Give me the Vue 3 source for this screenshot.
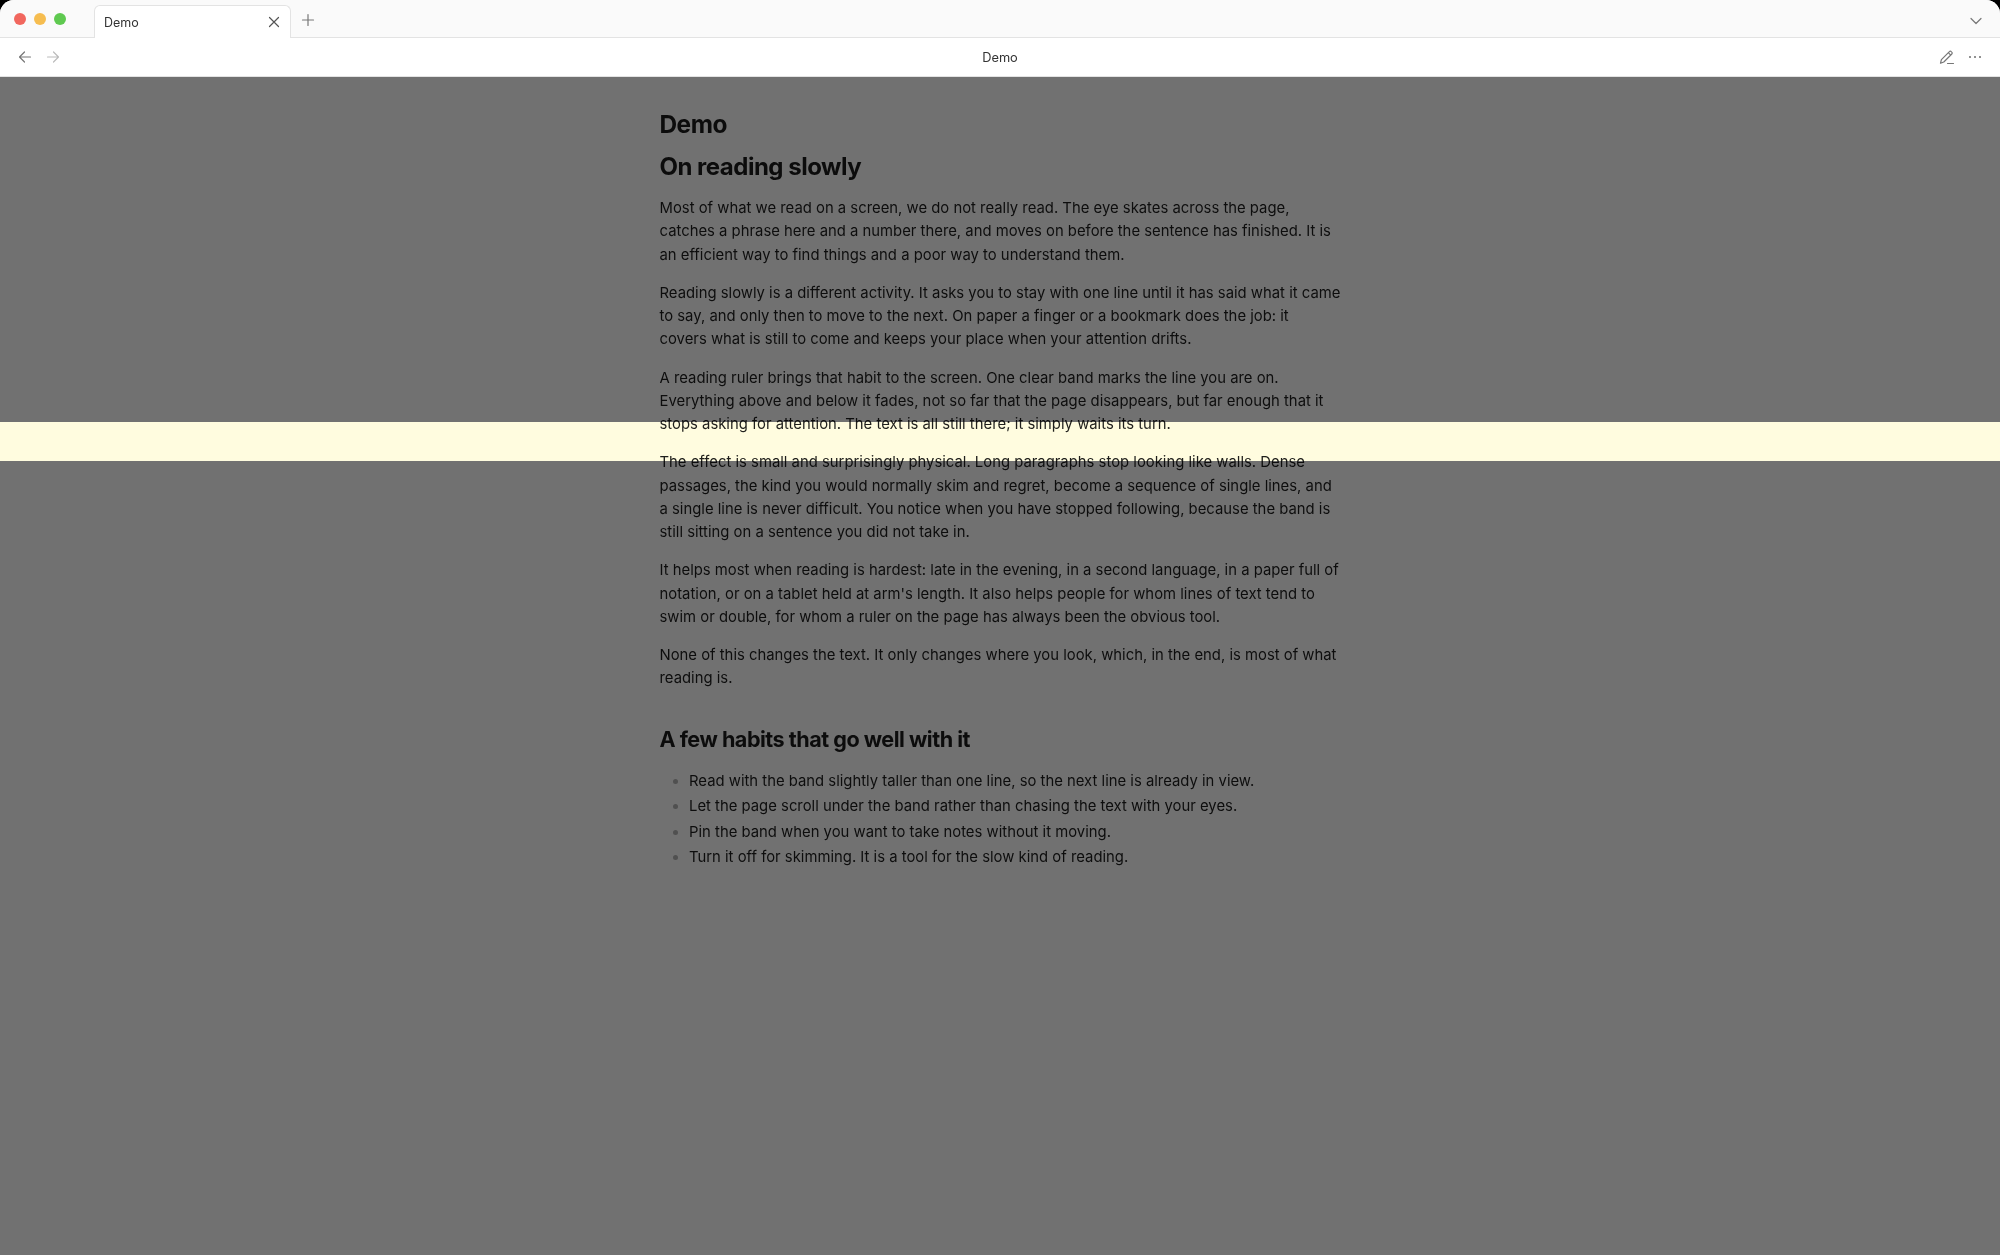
<script setup>
const paragraphs = [
  'Most of what we read on a screen, we do not really read. The eye skates across the page, catches a phrase here and a number there, and moves on before the sentence has finished. It is an efficient way to find things and a poor way to understand them.',
  'Reading slowly is a different activity. It asks you to stay with one line until it has said what it came to say, and only then to move to the next. On paper a finger or a bookmark does the job: it\ncovers what is still to come and keeps your place when your attention drifts.',
  'A reading ruler brings that habit to the screen. One clear band marks the line you are on. Everything above and below it fades, not so far that the page disappears, but far enough that it stops asking for attention. The text is all still there; it simply waits its turn.',
  'The effect is small and surprisingly physical. Long paragraphs stop looking like walls. Dense passages, the kind you would normally skim and regret, become a sequence of single lines, and a single line is never difficult. You notice when you have stopped following, because the band is still sitting on a sentence you did not take in.',
  "It helps most when reading is hardest: late in the evening, in a second language, in a paper full of notation, or on a tablet held at arm's length. It also helps people for whom lines of text tend to swim or double, for whom a ruler on the page has always been the obvious tool.",
  'None of this changes the text. It only changes where you look, which, in the end, is most of what reading is.'
]
const habits = [
  'Read with the band slightly taller than one line, so the next line is already in view.',
  'Let the page scroll under the band rather than chasing the text with your eyes.',
  'Pin the band when you want to take notes without it moving.',
  'Turn it off for skimming. It is a tool for the slow kind of reading.'
]
</script>

<template>
  <div class="window">
    <header class="tabbar">
      <div class="lights">
        <span class="light red"></span>
        <span class="light yellow"></span>
        <span class="light green"></span>
      </div>
      <div class="tab">
        <span class="tab-title">Demo</span>
        <svg class="tab-close" width="14" height="14" viewBox="0 0 14 14"><path d="M2.5 2.5l9 9M11.5 2.5l-9 9" /></svg>
      </div>
      <svg class="tab-add" width="14" height="14" viewBox="0 0 14 14"><path d="M7 1.5v11M1.5 7h11" /></svg>
      <svg class="tab-menu" width="14" height="14" viewBox="0 0 14 14"><path d="M2 4.5l5 5 5-5" /></svg>
    </header>
    <div class="toolbar">
      <div class="nav">
        <svg class="back" width="14" height="14" viewBox="0 0 14 14"><path d="M12.5 7h-11M6.5 2l-5 5 5 5" /></svg>
        <svg class="forward" width="14" height="14" viewBox="0 0 14 14"><path d="M1.5 7h11M7.5 2l5 5-5 5" /></svg>
      </div>
      <span class="doc-title">Demo</span>
      <div class="actions">
        <svg class="pencil" width="16" height="16" viewBox="0 0 16 16"><path d="M1.5 14.2l.9-3.6 8-8a1.3 1.3 0 0 1 1.9 0l.5.5a1.3 1.3 0 0 1 0 1.9l-8 8zM9.3 3.7l2.4 2.4M8.5 14.5h6" /></svg>
        <svg class="dots" width="14" height="14" viewBox="0 0 14 14"><circle cx="2" cy="7" r="1.1" /><circle cx="7" cy="7" r="1.1" /><circle cx="12" cy="7" r="1.1" /></svg>
      </div>
    </div>
    <main class="page">
      <article class="doc">
        <h1>Demo</h1>
        <h2>On reading slowly</h2>
        <p v-for="text in paragraphs" :key="text">{{ text }}</p>
        <h3>A few habits that go well with it</h3>
        <ul>
          <li v-for="habit in habits" :key="habit">{{ habit }}</li>
        </ul>
      </article>
      <div class="shade shade-top"></div>
      <div class="band"></div>
      <div class="shade shade-bottom"></div>
    </main>
  </div>
</template>

<style>
html, body { margin: 0; background: #000; }
</style>

<style scoped>
.window {
  width: 2000px;
  height: 1255px;
  display: flex;
  flex-direction: column;
  overflow: hidden;
  border-radius: 14px 14px 0 0;
  background: #fff;
  font-family: Inter, "Liberation Sans", sans-serif;
  color: #1d1d1f;
}
.tabbar {
  height: 38px;
  flex: none;
  display: flex;
  align-items: flex-end;
  background: #fafafa;
  border-bottom: 1px solid #e3e3e3;
  box-sizing: border-box;
  position: relative;
}
.lights {
  display: flex;
  gap: 8px;
  padding: 0 0 12px 14px;
  width: 80px;
  box-sizing: border-box;
}
.light { width: 12px; height: 12px; border-radius: 50%; }
.red { background: #f1675e; }
.yellow { background: #f6bd50; }
.green { background: #5fc950; }
.tab {
  width: 197px;
  height: 33px;
  margin: 0 0 -1px 14px;
  box-sizing: border-box;
  display: flex;
  align-items: center;
  justify-content: space-between;
  padding: 0 9px 0 9px;
  background: #fff;
  border: 1px solid #e3e3e3;
  border-bottom: none;
  border-radius: 6px 6px 0 0;
}
.tab-title { font-size: 12.5px; color: #333; }
svg { fill: none; stroke-width: 1.2; stroke-linecap: round; stroke-linejoin: round; }
.tab-close { stroke: #555; }
.tab-add { stroke: #777; margin: 0 0 10px 10px; }
.tab-menu { stroke: #777; margin: 0 17px 9px auto; }
.toolbar {
  height: 38px;
  flex: none;
  display: flex;
  align-items: center;
  justify-content: space-between;
  padding: 0 18px 0 18px;
  background: #fff;
  position: relative;
  box-sizing: border-box;
}
.nav { display: flex; gap: 14px; }
.back { stroke: #777; }
.forward { stroke: #bbb; }
.doc-title {
  position: absolute;
  left: 0;
  right: 0;
  text-align: center;
  font-size: 12.8px;
  color: #333;
}
.actions { display: flex; align-items: center; gap: 13px; }
.pencil { stroke: #777; }
.dots { fill: #777; stroke: none; }
.page {
  flex: 1;
  position: relative;
  background: #fff;
  border-top: 1px solid #e3e3e3;
}
.doc {
  width: 681px;
  margin: 0 auto;
  padding-top: 31.5px;
  font-size: 14.85px;
  line-height: 23.25px;
  color: #1f1f1f;
}
h1, h2, h3 { margin: 0; font-weight: 700; letter-spacing: -0.5px; color: #1b1b1b; }
h1 { font-size: 24.4px; line-height: 30px; margin-bottom: 13px; }
h2 { font-size: 24px; line-height: 30px; margin-bottom: 15.5px; }
h3 { font-size: 21.6px; line-height: 28px; margin: 34.5px 0 15.6px; }
p { margin: 0 -3px 15px 0; white-space: pre-line; }
ul { margin: 0; padding: 0 0 0 29.5px; list-style: none; }
li { line-height: 25.6px; position: relative; }
li::before {
  content: "";
  position: absolute;
  left: -16px;
  top: 10px;
  width: 5px;
  height: 5px;
  border-radius: 50%;
  background: #b4b4b4;
}
.shade, .band { position: absolute; left: 0; right: 0; }
.shade { background: rgba(0, 0, 0, 0.555); }
.shade-top { top: 0; height: 345px; }
.band { top: 345px; height: 39px; background: rgba(255, 245, 157, 0.33); mix-blend-mode: multiply; }
.shade-bottom { top: 384px; bottom: 0; }
</style>
